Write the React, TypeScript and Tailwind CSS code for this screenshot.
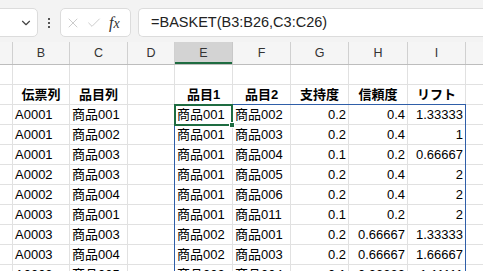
import { ChevronDown, X, Check } from "lucide-react";

const cols = [
  { key: "A", w: "w-[13px]" },
  { key: "B", w: "w-[57px]" },
  { key: "C", w: "w-[58px]" },
  { key: "D", w: "w-[47px]" },
  { key: "E", w: "w-[58px]" },
  { key: "F", w: "w-[58px]" },
  { key: "G", w: "w-[58px]" },
  { key: "H", w: "w-[59px]" },
  { key: "I", w: "w-[58px]" },
  { key: "J", w: "w-[40px]" },
];

type Cell = { v: string; align?: "l" | "r" | "c"; bold?: boolean };

const headers: Cell[] = [
  { v: "" },
  { v: "伝票列", align: "c", bold: true },
  { v: "品目列", align: "c", bold: true },
  { v: "" },
  { v: "品目1", align: "c", bold: true },
  { v: "品目2", align: "c", bold: true },
  { v: "支持度", align: "c", bold: true },
  { v: "信頼度", align: "c", bold: true },
  { v: "リフト", align: "c", bold: true },
  { v: "" },
];

const data: string[][] = [
  ["A0001", "商品001", "商品001", "商品002", "0.2", "0.4", "1.33333"],
  ["A0001", "商品002", "商品001", "商品003", "0.2", "0.4", "1"],
  ["A0001", "商品003", "商品001", "商品004", "0.1", "0.2", "0.66667"],
  ["A0002", "商品003", "商品001", "商品005", "0.2", "0.4", "2"],
  ["A0002", "商品004", "商品001", "商品006", "0.2", "0.4", "2"],
  ["A0003", "商品001", "商品001", "商品011", "0.1", "0.2", "2"],
  ["A0003", "商品003", "商品002", "商品001", "0.2", "0.66667", "1.33333"],
  ["A0003", "商品004", "商品002", "商品003", "0.2", "0.66667", "1.66667"],
  ["A0003", "商品005", "商品002", "商品004", "0.1", "0.33333", "1.11111"],
];

function toRow(r: string[]): Cell[] {
  return [
    { v: "" },
    { v: r[0] },
    { v: r[1] },
    { v: "" },
    { v: r[2] },
    { v: r[3] },
    { v: r[4], align: "r" },
    { v: r[5], align: "r" },
    { v: r[6], align: "r" },
    { v: "" },
  ];
}

function Row({ cells }: { cells: Cell[] }) {
  return (
    <div className="flex h-[20px] shrink-0">
      {cells.map((c, i) => (
        <div
          key={i}
          className={`${cols[i].w} flex shrink-0 items-center overflow-hidden whitespace-nowrap border-r border-b border-[#e1e1e1] px-[2px] ${
            c.align === "r" ? "justify-end" : c.align === "c" ? "justify-center" : "justify-start"
          } ${c.bold ? "font-bold" : ""}`}
        >
          {c.v}
        </div>
      ))}
    </div>
  );
}

export default function App() {
  const rows: Cell[][] = [cols.map(() => ({ v: "" })), headers, ...data.map(toRow)];

  return (
    <div
      className="flex h-[271px] w-[483px] flex-col overflow-hidden bg-white text-[13px] text-black"
      style={{ fontFamily: '"Liberation Sans", "Noto Sans CJK JP", sans-serif' }}
    >
      <div className="flex h-[42px] shrink-0 items-start gap-[7px] bg-[#f3f3f3] pt-[8px]">
        <div className="-ml-[6px] flex h-[29px] w-[44px] items-center justify-end rounded-[5px] border border-[#dcdcdc] bg-white pr-[4px]">
          <ChevronDown className="h-[14px] w-[14px] text-[#444]" strokeWidth={2} />
        </div>
        <div className="flex h-[29px] w-[8px] flex-col items-center justify-center gap-[2px]">
          <span className="h-[2px] w-[2px] bg-[#555]" />
          <span className="h-[2px] w-[2px] bg-[#555]" />
          <span className="h-[2px] w-[2px] bg-[#555]" />
        </div>
        <div className="flex h-[29px] w-[71px] items-center gap-[5px] rounded-[5px] border border-[#dcdcdc] bg-white pl-[4px]">
          <X className="h-[16px] w-[16px] text-[#c4c4c4]" strokeWidth={1.3} />
          <Check className="h-[16px] w-[16px] text-[#c4c4c4]" strokeWidth={1.3} />
          <span
            className="ml-[2px] text-[16px] italic text-[#333]"
            style={{ fontFamily: '"Liberation Serif", serif' }}
          >
            f<span className="text-[14px]">x</span>
          </span>
        </div>
        <div className="flex h-[29px] flex-1 items-center rounded-l-[5px] border border-r-0 border-[#dcdcdc] bg-white pl-[12px] text-[14.5px] text-[#222]">
          =BASKET(B3:B26,C3:C26)
        </div>
      </div>

      <div className="flex h-[23px] shrink-0 border-b border-[#bdbdbd] bg-[#f5f5f5] text-[12.5px] text-[#333]">
        {cols.map((c) => (
          <div
            key={c.key}
            className={`${c.w} flex shrink-0 items-center justify-center border-r ${
              c.key === "E"
                ? "border-r-[#c8c8c8] bg-[#d3d3d3] shadow-[inset_0_-2px_0_#1e6c41]"
                : "border-[#d0d0d0]"
            }`}
          >
            {c.key === "A" || c.key === "J" ? "" : c.key}
          </div>
        ))}
      </div>

      <div className="relative flex flex-col">
        {rows.map((r, i) => (
          <Row key={i} cells={r} />
        ))}
        <div className="pointer-events-none absolute left-[174px] top-[39px] h-[200px] w-[292px] border border-[#2f5ea8]" />
        <div className="pointer-events-none absolute left-[174px] top-[39px] h-[22px] w-[59px] border-2 border-[#1e6c41]" />
        <div className="pointer-events-none absolute left-[229px] top-[57px] h-[6px] w-[6px] border border-white bg-[#1e6c41]" />
      </div>
    </div>
  );
}
